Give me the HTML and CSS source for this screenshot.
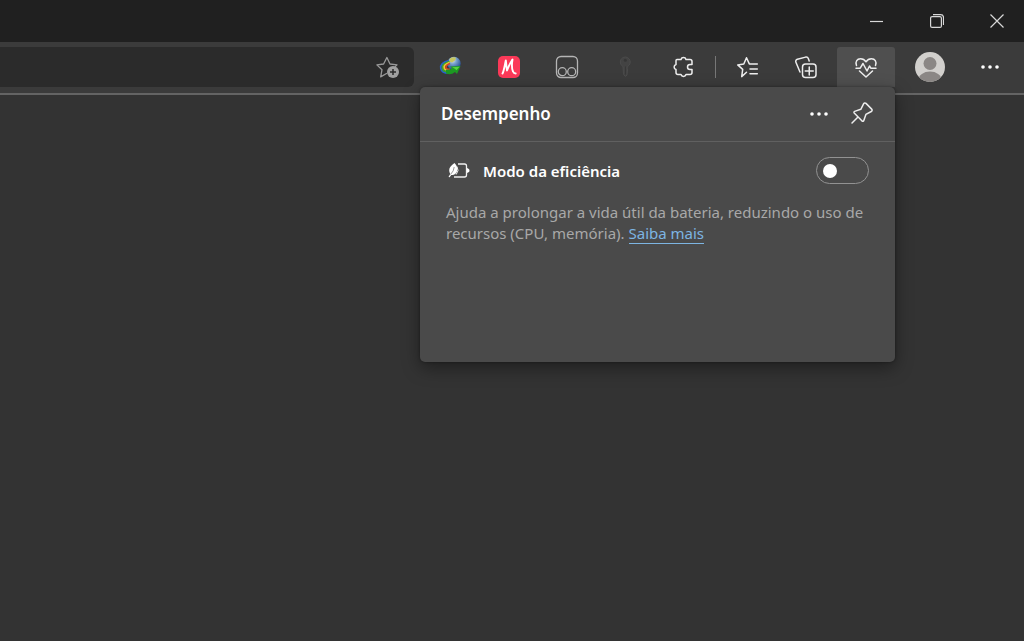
FILE: index.html
```html
<!DOCTYPE html>
<html lang="pt-BR">
<head>
<meta charset="utf-8">
<meta name="viewport" content="width=device-width, initial-scale=1">
<title>Desempenho</title>
<link rel="stylesheet" href="styles.css">
</head>
<body>
<header class="titlebar">
  <button class="window-btn" aria-label="Minimizar"><svg width="14" height="14" viewBox="0 0 14 14"><path d="M0 7.500h13"/></svg></button>
  <button class="window-btn" aria-label="Restaurar"><svg width="14" height="14" viewBox="0 0 14 14"><rect x=".6" y="2.600" width="10.800" height="10.800" rx="1.500"/><path d="M3 .6h7.500a3 3 0 0 1 3 3V11"/></svg></button>
  <button class="window-btn" aria-label="Fechar"><svg width="14" height="14" viewBox="0 0 14 14"><path d="M.5.5l13 13M13.500.5l-13 13"/></svg></button>
</header>
<nav class="toolbar">
  <div class="address">
    <button class="fav-btn" aria-label="Adicionar aos favoritos">
      <svg width="24" height="24" viewBox="0 0 24 24"><path class="line" d="M10.500 18.500l-5.800 3.400 1.300-7.200L.9 9.900l6.700-.9L10.900 2.500 14 9l7 .9-2.200 2.200"/><circle class="fill" cx="17" cy="17" r="6"/><path class="plus" d="M17 14v6M14 17h6"/></svg>
    </button>
  </div>
  <div class="actions">
    <button class="tool" aria-label="Download Manager">
      <svg width="24" height="22" viewBox="0 0 24 22">
        <defs><radialGradient id="globe" cx=".4" cy=".25" r=".8"><stop offset="0" stop-color="#e3ecee"/><stop offset=".35" stop-color="#7ba2cf"/><stop offset="1" stop-color="#123c80"/></radialGradient></defs>
        <circle cx="15" cy="7.500" r="6.700" fill="url(#globe)"/>
        <path d="M11 2.500q3-2 6-.8l-1 2.800-3 2-3-1z" fill="#c5c65f"/>
        <g fill="none" stroke-width="1.700">
          <path d="M10 4.500C4 5.500 1 9 1.800 12.500S7 17.500 12 17" stroke="#2763cd"/>
          <path d="M10.500 5.500C5 7 2.800 9.500 3.500 12.500S8 16 12 15.500" stroke="#3da52d"/>
          <path d="M10.500 6.500C6.500 8 4.500 10 5.200 12S8 14.500 11 14" stroke="#f1cb30"/>
          <path d="M11 7.500C8 8.500 6.300 10.500 7 12s2 1.500 4 1" stroke="#dc4424"/>
        </g>
        <path d="M7 13.500q4 1 6-1.500l-2-1.500 10.500-.5-3.500 8-2-2q-4 3.500-9 1.500z" fill="#1c9922"/>
        <path d="M13 11.300l7.500-.6-3 3.500q-1-1.500-4.500-2.900z" fill="#56d43a"/>
      </svg>
    </button>
    <button class="tool" aria-label="Extensão M">
      <svg width="22" height="22" viewBox="0 0 22 22"><rect width="22" height="22" rx="5" fill="#fb3958"/><path d="M4.500 17.500C6 15 7 8 7.800 4.500c.5 3 .6 7 1.200 10C10.500 11 12 7 14.500 3.500c-.7 4-.8 9 .5 12 .6 1.500 1.600 2 2.700 2" fill="none" stroke="#fff" stroke-width="1.900" stroke-linecap="round" stroke-linejoin="round"/></svg>
    </button>
    <button class="tool" aria-label="Tampermonkey">
      <svg width="24" height="24" viewBox="0 0 24 24"><g fill="none" stroke="#b5b5b5" stroke-width="1.300"><rect x="1.500" y="1.500" width="21" height="21" rx="4.500"/><circle cx="7.300" cy="16.700" r="4"/><circle cx="16.700" cy="16.700" r="4"/></g></svg>
    </button>
    <button class="tool" aria-label="Senhas">
      <svg width="22" height="22" viewBox="0 0 22 22"><path d="M9 10.500a5 5 0 1 1 4.500 0l-.5 1.500.5 2-.5 5-1.500 1.500-2-2z" fill="#434343" stroke="#4b4b4b"/><circle cx="11.300" cy="4.300" r="1.500" fill="#363636"/><path d="M11.500 10.500v8" stroke="#373737"/></svg>
    </button>
    <button class="tool" aria-label="Extensões">
      <svg class="icon" width="24" height="24" viewBox="0 0 24 24"><path d="M6 4.500h4a2.600 2.600 0 0 1 5 0h4a2 2 0 0 1 2 2v3h-2a2.500 2.500 0 0 0 0 5h2v3a2 2 0 0 1-2 2h-4a2.600 2.600 0 0 1-5 0H7a2 2 0 0 1-2-2v-3a2.600 2.600 0 0 1 0-5v-4a1 1 0 0 1 1-1z"/></svg>
    </button>
    <span class="separator"></span>
    <button class="tool" aria-label="Favoritos">
      <svg class="icon" width="24" height="24" viewBox="0 0 24 24"><path d="M10.500 17.300l-4.800 4.300 1-7.200-5-4.500 6.100-.9L10.500 2.700 13.300 8.900h8M14 14h7.300M14 18.700h7.300"/></svg>
    </button>
    <button class="tool" aria-label="Coleções">
      <svg class="icon" width="24" height="24" viewBox="0 0 24 24"><rect x="8.500" y="9" width="13.500" height="13.500" rx="3"/><path d="M15.250 12v8M11.250 16h8M6 17L1.900 7.300a2.200 2.200 0 0 1 1.500-3L11.600 2.100a2.300 2.300 0 0 1 2.700 1.500l.9 2.500"/></svg>
    </button>
    <div class="performance">
      <button class="tool tool-active" aria-label="Desempenho" aria-expanded="true">
        <svg class="icon" width="24" height="24" viewBox="0 0 24 24"><path d="M2.500 10.500C1 6.500 3.200 3.800 6.500 3.800c2.400 0 4.200 1 5.500 3 1.300-2 3.100-3 5.500-3 3.300 0 5.500 2.700 4 6.700M2 13.200h4.200L9 8.500l4 7.500 2.500-5 1.300 2.200H22M5.500 16l6.500 6 6.500-6"/></svg>
      </button>
      <section class="panel" aria-labelledby="panel-title">
        <div class="panel-head">
          <h1 class="panel-title" id="panel-title">Desempenho</h1>
          <button class="panel-btn" aria-label="Mais opções"><svg class="dots" width="20" height="20" viewBox="0 0 20 20"><circle cx="3" cy="10" r="1.800"/><circle cx="10" cy="10" r="1.800"/><circle cx="17" cy="10" r="1.800"/></svg></button>
          <button class="panel-btn" aria-label="Fixar"><svg class="icon" width="24" height="24" viewBox="0 0 24 24"><path d="M13.700 1.700a1.500 1.500 0 0 1 2.300-.3l5.700 5.700a1.500 1.500 0 0 1-.4 2.400l-5.400 2.900-2.200 6.300a1 1 0 0 1-1.600.4L4.200 11a1 1 0 0 1 .4-1.600l6.200-2.100zM8 15l-6 6"/></svg></button>
        </div>
        <div class="panel-body">
          <div class="mode">
            <svg class="battery" width="22" height="18" viewBox="0 0 22 18"><path d="M10 2h6.500a2 2 0 0 1 2 2v9a2 2 0 0 1-2 2H6" fill="none" stroke="#f0f0f0" stroke-width="1.300"/><path d="M19 6l1.500.7q1 .4 1 1.800t-1 1.800L19 11z" fill="#fff"/><path d="M6.500 1c3 3 4 7 1.500 10-1 1.500-3 2.200-4.700 2l-1.700 2.200L.5 15l1.700-3C-.3 7 2 4.500 6.500 1z" fill="#fff"/><path d="M2.500 12.500Q6 9 6.200 5" fill="none" stroke="#6d6d6d" stroke-width=".7"/><path d="M9 4.500q2.500 4-.8 8" fill="none" stroke="#eee"/></svg>
            <label class="mode-label" for="efficiency">Modo da eficiência</label>
            <input class="switch" type="checkbox" role="switch" id="efficiency">
          </div>
          <p class="description">Ajuda a prolongar a vida útil da bateria, reduzindo o uso de recursos (CPU, memória). <a class="link" href="#">Saiba mais</a></p>
        </div>
      </section>
    </div>
    <button class="tool profile" aria-label="Perfil">
      <svg width="30" height="30" viewBox="0 0 30 30"><defs><clipPath id="disc"><circle cx="15" cy="15" r="15"/></clipPath></defs><g clip-path="url(#disc)"><path d="M0 0h30v30H0z" fill="#d2d0cd"/><circle cx="15" cy="11.500" r="6.500" fill="#8b8785"/><ellipse cx="15" cy="28" rx="11.500" ry="8.500" fill="#8b8785"/></g></svg>
    </button>
    <button class="tool" aria-label="Configurações e mais"><svg class="dots" width="20" height="20" viewBox="0 0 20 20"><circle cx="3" cy="10" r="1.800"/><circle cx="10" cy="10" r="1.800"/><circle cx="17" cy="10" r="1.800"/></svg></button>
  </div>
</nav>
<main class="page"></main>
</body>
</html>
```
FILE: styles.css
```css
* { box-sizing: border-box; }

body {
  display: flex;
  flex-direction: column;
  min-height: 100vh;
  margin: 0;
  background: #333;
  color: #fff;
  font-family: "Noto Sans", "Open Sans", sans-serif;
}

button {
  display: flex;
  align-items: center;
  justify-content: center;
  padding: 0;
  border: 0;
  background: none;
  color: inherit;
}

svg { display: block; flex: none; }

.titlebar {
  display: flex;
  justify-content: flex-end;
  gap: 16px;
  height: 42px;
  padding-right: 5px;
  background: #202020;
}

.window-btn { width: 44px; }
.window-btn svg { fill: none; stroke: #d8d8d8; stroke-width: 1.2; }

.toolbar {
  display: flex;
  gap: 8px;
  height: 53px;
  padding: 5px 5px 6px 0;
  border-bottom: 2px solid #646464;
  background: #3b3b3b;
}

.address {
  display: flex;
  flex: 1;
  align-items: center;
  justify-content: flex-end;
  padding-right: 14px;
  border-radius: 0 6px 6px 0;
  background: #2b2b2b;
}

.fav-btn .line { fill: none; stroke: #999; stroke-width: 1.3; stroke-linejoin: round; stroke-linecap: round; }
.fav-btn .fill { fill: #a0a0a0; }
.fav-btn .plus { stroke: #2b2b2b; stroke-width: 1.5; }

.actions { display: flex; align-items: center; }

.tool { width: 58px; height: 40px; }

.icon {
  fill: none;
  stroke: #ededed;
  stroke-width: 1.5;
  stroke-linecap: round;
  stroke-linejoin: round;
}

.dots { fill: #fff; }

.separator { width: 1px; height: 22px; margin: 0 3px; background: #777; }

.performance { position: relative; margin-left: 2px; }
.tool-active { border-radius: 3px 3px 0 0; background: #4f4f4f; }
.profile { margin: 0 2px 0 6px; }

.panel {
  position: absolute;
  top: 100%;
  right: 0;
  width: 475px;
  min-height: 275px;
  border-radius: 5px;
  background: #4a4a4a;
  box-shadow: 0 6px 18px rgba(0, 0, 0, .4), 0 0 3px rgba(0, 0, 0, .35);
}

.panel-head {
  display: flex;
  align-items: center;
  gap: 12px;
  height: 55px;
  padding: 0 18px 0 21px;
  border-bottom: 1px solid #606060;
}

.panel-title { flex: 1; margin: 0; font-size: 17px; font-weight: 600; line-height: 24px; }
.panel-btn { width: 31px; height: 32px; }

.panel-body { padding: 15px 26px; }

.mode { display: flex; align-items: center; height: 27px; padding-left: 2px; }
.mode-label { flex: 1; margin-left: 13px; font-size: 15px; font-weight: 600; }

.switch {
  display: flex;
  align-items: center;
  width: 53px;
  height: 27px;
  margin: 0;
  padding: 0 6px;
  appearance: none;
  border: 1px solid #929292;
  border-radius: 14px;
}
.switch::before { width: 14px; height: 14px; border-radius: 50%; background: #fff; content: ""; }
.switch:checked { justify-content: flex-end; }

.description { margin: 18px 0 0; color: #a8a8a8; font-size: 15px; line-height: 21px; }
.link { border-bottom: 1px solid #7db5e2; color: #7db5e2; text-decoration: none; }

.page { flex: 1; }
```
